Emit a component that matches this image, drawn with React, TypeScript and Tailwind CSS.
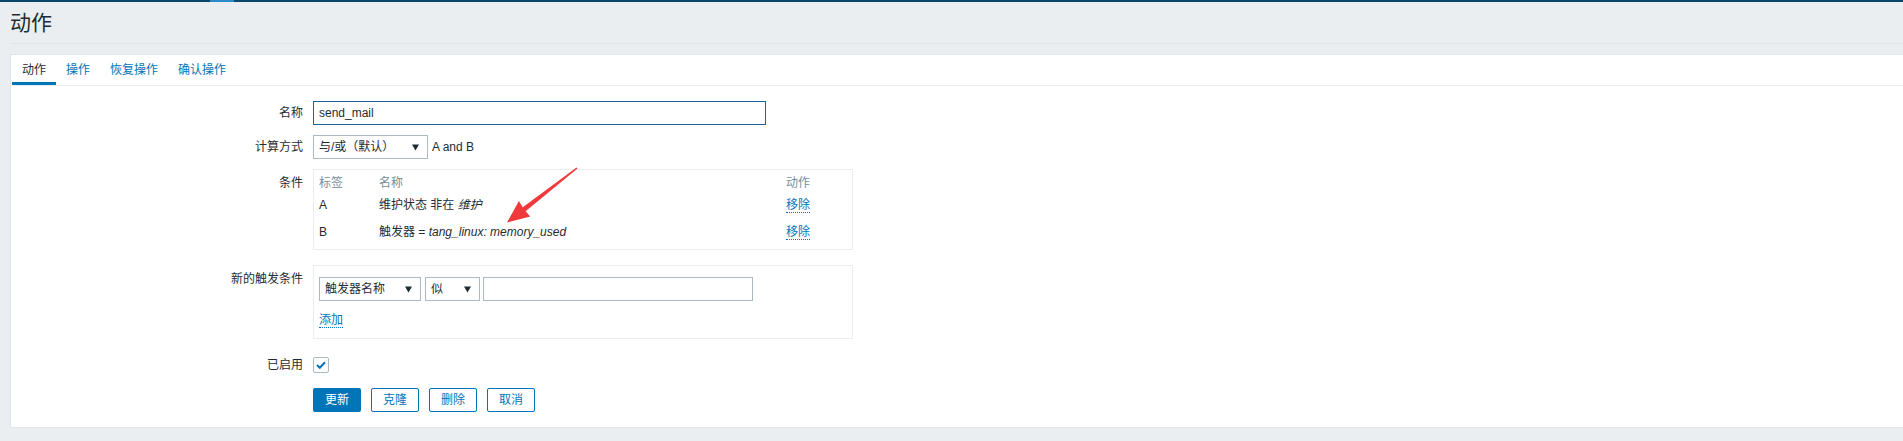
import React from "react";

const font = { fontFamily: '"Liberation Sans", Arial, "Noto Sans CJK SC", sans-serif' };

const Arrow = () => (
  <svg className="absolute left-0 top-0 pointer-events-none" width={1903} height={441}>
    <polygon
      fill="#f0393b"
      points="577.5,168.6 525.6,211.2 530.2,216.5 507,222.5 518.9,201 522.8,207.2 576.5,167.4"
    />
  </svg>
);

const Caret = () => (
  <svg width="7" height="7" viewBox="0 0 7 7" className="shrink-0">
    <path d="M0 0.5h7L3.5 6.5z" fill="#1f2c33" />
  </svg>
);

const Select = ({ text, w }: { text: string; w: string }) => (
  <div className={`${w} h-[24px] border border-[#acbbc2] bg-white flex items-center justify-between pl-[5px] pr-[8px]`}>
    <span>{text}</span>
    <Caret />
  </div>
);

const Link = ({ children }: { children: React.ReactNode }) => (
  <span className="text-[#0275b8] border-b border-dotted border-[#0275b8] leading-[14px]">{children}</span>
);

const Row = ({ label, top, children, className = "" }: { label: string; top?: boolean; children: React.ReactNode; className?: string }) => (
  <div className={`flex ${top ? "items-start" : "items-center"} ${className}`}>
    <div className={`w-[292px] text-right leading-[14px] ${top ? "pt-[7px]" : ""}`}>{label}</div>
    <div className="pl-[10px] flex items-center">{children}</div>
  </div>
);

const tabs = ["动作", "操作", "恢复操作", "确认操作"];

export default function App() {
  return (
    <div className="relative h-[441px] bg-[#ebeef0] text-[12px] text-[#1f2c33] overflow-hidden" style={font}>
      <div className="h-[2px] bg-[#0a466a] flex">
        <div className="ml-[210px] w-[24px] bg-[#2c8acb]" />
      </div>
      <div className="pl-[10px]">
        <div className="h-[42px] flex items-center border-b border-[#dfe4e7]">
          <h1 className="text-[21px] leading-none">动作</h1>
        </div>
        <div className="mt-[10px] bg-white border border-r-0 border-[#dfe4e7]">
          <div className="h-[31px] flex border-b border-[#ebeef0] pl-[1px]">
            {tabs.map((t, i) => (
              <div
                key={t}
                className={`px-[10px] flex items-center pt-[2px] border-b-[3px] ${i === 0 ? "border-[#0275b8] text-[#1f2c33]" : "border-transparent text-[#0275b8]"}`}
              >
                {t}
              </div>
            ))}
          </div>
          <div className="pt-[15px] pb-[15px]">
            <Row label="名称">
              <div className="w-[453px] h-[24px] border border-[#1e63a0] flex items-center pl-[5px]">send_mail</div>
            </Row>
            <Row label="计算方式" className="mt-[10px]">
              <Select text="与/或（默认）" w="w-[115px]" />
              <span className="ml-[4px]">A and B</span>
            </Row>
            <Row label="条件" top className="mt-[10px]">
              <div className="w-[540px] border border-[#ebeef0] pl-[5px] pt-[2px] pb-[6px]">
                <div className="flex h-[22px] items-center text-[#768d99]">
                  <div className="w-[60px]">标签</div>
                  <div className="w-[407px]">名称</div>
                  <div>动作</div>
                </div>
                <div className="flex h-[22px] items-center">
                  <div className="w-[60px]">A</div>
                  <div className="w-[407px]">
                    维护状态 非在 <i>维护</i>
                  </div>
                  <Link>移除</Link>
                </div>
                <div className="flex h-[22px] items-center mt-[5px]">
                  <div className="w-[60px]">B</div>
                  <div className="w-[407px]">
                    触发器 = <i>tang_linux: memory_used</i>
                  </div>
                  <Link>移除</Link>
                </div>
              </div>
            </Row>
            <Row label="新的触发条件" top className="mt-[15px]">
              <div className="w-[540px] border border-[#ebeef0] pl-[5px] pt-[11px] pb-[10px]">
                <div className="flex items-center">
                  <Select text="触发器名称" w="w-[102px]" />
                  <div className="ml-[4px]">
                    <Select text="似" w="w-[55px]" />
                  </div>
                  <div className="ml-[3px] w-[270px] h-[24px] border border-[#acbbc2]" />
                </div>
                <div className="mt-[11px] h-[16px] flex items-center">
                  <Link>添加</Link>
                </div>
              </div>
            </Row>
            <Row label="已启用" className="mt-[18px]">
              <div className="w-[16px] h-[16px] border border-[#acbbc2] rounded-[2px] flex items-center justify-center">
                <svg width="10" height="8" viewBox="0 0 10 8">
                  <path d="M1 4l2.8 2.8L9 1.2" stroke="#0275b8" strokeWidth="2" fill="none" />
                </svg>
              </div>
            </Row>
            <div className="mt-[15px] flex pl-[302px] gap-[10px]">
              <button className="w-[48px] h-[24px] bg-[#0275b8] text-white rounded-[2px]">更新</button>
              <button className="w-[48px] h-[24px] border border-[#0275b8] text-[#0275b8] rounded-[2px]">克隆</button>
              <button className="w-[48px] h-[24px] border border-[#0275b8] text-[#0275b8] rounded-[2px]">删除</button>
              <button className="w-[48px] h-[24px] border border-[#0275b8] text-[#0275b8] rounded-[2px]">取消</button>
            </div>
          </div>
        </div>
      </div>
      <Arrow />
    </div>
  );
}
